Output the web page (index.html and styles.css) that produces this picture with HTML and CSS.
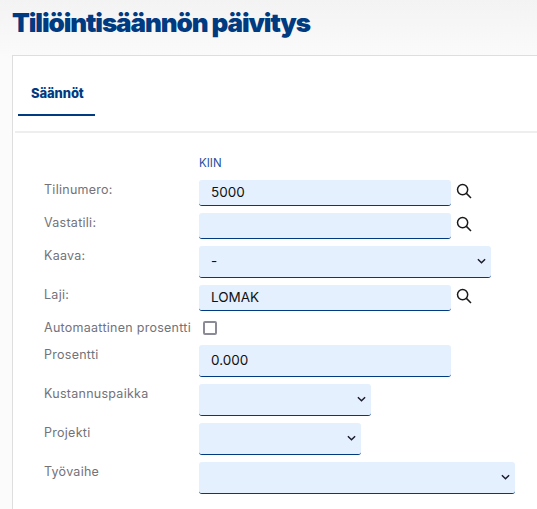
FILE: index.html
```html
<!DOCTYPE html>
<html lang="en">
  <head>
    <meta charset="UTF-8" />
    <title>Tiliöintisäännön päivitys</title>
    <link rel="stylesheet" href="styles.css">
  </head>
  <body>
    <h1 class="title">Tiliöintisäännön päivitys</h1>
    <div class="panel">
      <div class="tabs">
        <div class="tab">Säännöt</div>
      </div>
      <form class="rule-form">
        <div class="company">KIIN</div>

        <div class="form-row">
          <label>Tilinumero:</label>
          <div class="field w-252"><span class="value">5000</span></div>
          <svg class="search" viewBox="0 0 16 16"><circle cx="6.6" cy="6.6" r="5.1"/><path d="M10.4 10.4L15 15"/></svg>
        </div>
        <div class="form-row">
          <label>Vastatili:</label>
          <div class="field w-252"></div>
          <svg class="search" viewBox="0 0 16 16"><circle cx="6.6" cy="6.6" r="5.1"/><path d="M10.4 10.4L15 15"/></svg>
        </div>
        <div class="form-row">
          <label>Kaava:</label>
          <div class="field select w-292">
            <span class="value">-</span>
            <svg class="chevron" viewBox="0 0 10 6"><path d="M1 1l4 4 4-4"/></svg>
          </div>
        </div>
        <div class="form-row">
          <label>Laji:</label>
          <div class="field w-252"><span class="value">LOMAK</span></div>
          <svg class="search" viewBox="0 0 16 16"><circle cx="6.6" cy="6.6" r="5.1"/><path d="M10.4 10.4L15 15"/></svg>
        </div>
        <div class="form-row check-row">
          <label>Automaattinen prosentti</label>
          <span class="checkbox"></span>
        </div>
        <div class="form-row">
          <label>Prosentti</label>
          <div class="field tall w-252"><span class="value">0.000</span></div>
        </div>
        <div class="form-row">
          <label>Kustannuspaikka</label>
          <div class="field select w-172">
            <svg class="chevron" viewBox="0 0 10 6"><path d="M1 1l4 4 4-4"/></svg>
          </div>
        </div>
        <div class="form-row">
          <label>Projekti</label>
          <div class="field select w-162">
            <svg class="chevron" viewBox="0 0 10 6"><path d="M1 1l4 4 4-4"/></svg>
          </div>
        </div>
        <div class="form-row">
          <label>Työvaihe</label>
          <div class="field select w-316">
            <svg class="chevron" viewBox="0 0 10 6"><path d="M1 1l4 4 4-4"/></svg>
          </div>
        </div>
      </form>
    </div>
  </body>
</html>
```

FILE: styles.css
```css
body {
  margin: 0;
  height: 509px;
  overflow: hidden;
  padding-left: 12px;
  font-family: "Inter", "Open Sans", sans-serif;
  background: linear-gradient(#f3f3f3, #fbfbfb 60px);
}

.title {
  margin: 0;
  padding-top: 7px;
  height: 55px;
  box-sizing: border-box;
  font-size: 26px;
  line-height: 32px;
  font-weight: 900;
  letter-spacing: -1.1px;
  color: #003a80;
}

.panel {
  background: #fff;
  border: 1px solid #dedede;
  border-right: none;
  height: 460px;
  padding-left: 2px;
}

.tabs {
  height: 75px;
  border-bottom: 2px solid #eeeeee;
}

.tab {
  width: 77px;
  height: 60px;
  margin-left: 3px;
  box-sizing: border-box;
  padding: 28px 0 0 13px;
  font-size: 13px;
  line-height: 18px;
  font-weight: 800;
  letter-spacing: -0.1px;
  color: #003a80;
  border-bottom: 2px solid #003a80;
}

.rule-form {
  padding: 22px 0 0 29px;
}

.company {
  margin-left: 155px;
  margin-bottom: 9px;
  line-height: 16px;
  font-size: 11.5px;
  color: #1f4fa0;
}

.form-row {
  display: flex;
  align-items: flex-start;
  margin-bottom: 7px;
}

.form-row label {
  width: 155px;
  flex: none;
  line-height: 20px;
  font-size: 12.5px;
  letter-spacing: 0.27px;
  white-space: nowrap;
  color: #72727a;
}

.field {
  height: 26px;
  box-sizing: border-box;
  display: flex;
  align-items: center;
  padding: 0 0 1px 12px;
  background: #e4f0fd;
  border-bottom: 1.5px solid #003a80;
  border-radius: 3px;
  font-size: 13.5px;
  color: #111;
}

.select {
  height: 32px;
  justify-content: space-between;
}

.tall {
  height: 32px;
}

.w-252 { width: 252px; }
.w-292 { width: 292px; }
.w-172 { width: 172px; }
.w-162 { width: 162px; }
.w-316 { width: 316px; }

.search {
  width: 16px;
  height: 16px;
  margin: 3px 0 0 5px;
  fill: none;
  stroke: #1a1a1a;
  stroke-width: 1.5;
}

.chevron {
  width: 9px;
  height: 6px;
  margin-left: auto;
  margin-right: 5px;
  fill: none;
  stroke: #1a1a2a;
  stroke-width: 1.6;
}

.check-row {
  height: 20px;
  align-items: center;
}

.checkbox {
  width: 14px;
  height: 14px;
  box-sizing: border-box;
  margin-left: 4px;
  background: #fff;
  border: 2px solid #8b8b98;
  border-radius: 2px;
}
```
